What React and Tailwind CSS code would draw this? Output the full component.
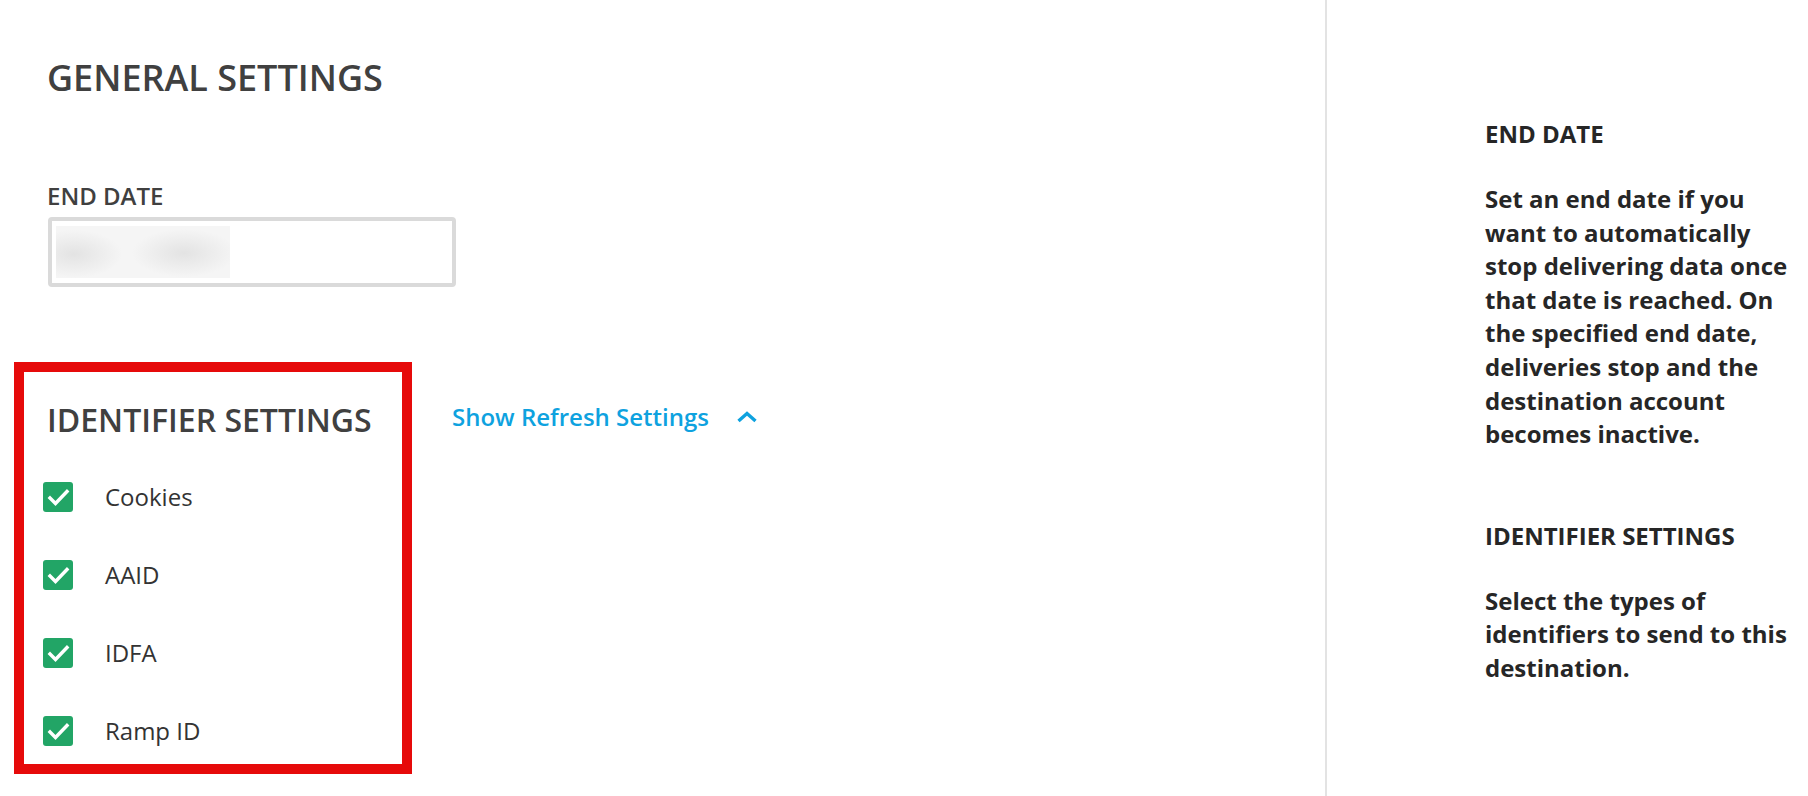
import React, { useState } from 'react';

const identifiers = ['Cookies', 'AAID', 'IDFA', 'Ramp ID'];

const CheckBox = ({ checked, onChange }) => (
    <button
        type="button"
        onClick={onChange}
        className={`flex h-[30px] w-[30px] shrink-0 items-center justify-center rounded-[3px] ${
            checked ? 'bg-[#22a566]' : 'border-2 border-[#bdbdbd] bg-white'
        }`}
    >
        {checked && (
            <svg width="30" height="30" viewBox="0 0 30 30" fill="none">
                <path d="M7 16 L12.5 21.5 L24 9.5" stroke="#fff" strokeWidth="3.4" strokeLinecap="square" strokeLinejoin="miter" />
            </svg>
        )}
    </button>
);

const App = () => {
    const [selected, setSelected] = useState(identifiers);
    const [showRefresh, setShowRefresh] = useState(true);

    const toggle = (name) => {
        setSelected(prev => (prev.includes(name) ? prev.filter(n => n !== name) : [...prev, name]));
    };

    return (
        <div className="flex min-h-[796px] bg-white font-['Open_Sans',sans-serif]">
            {/* main settings column */}
            <main className="w-[1325px] shrink-0 pl-[47px] pt-[60px]">
                <h1 className="text-[36px] leading-[36px] font-semibold text-[#404040]">GENERAL SETTINGS</h1>

                <label className="mt-[88px] block text-[24px] leading-[24px] font-semibold text-[#404040]">END DATE</label>
                <div className="mt-[9px] ml-[1px] h-[70px] w-[408px] rounded-[4px] border-[4px] border-[#dadada] px-[4px] py-[5px]">
                    {/* redacted date */}
                    <div className="h-full w-[174px] bg-[#f5f5f5] bg-[image:radial-gradient(48px_24px_at_18px_28px,#e3e3e3,#f5f5f500),radial-gradient(52px_24px_at_128px_27px,#e3e3e3,#f5f5f500)]" />
                </div>

                <div className="mt-[75px] flex items-start">
                    <section className="-ml-[33px] w-[398px] border-[10px] border-[#e60a0a] pl-[19px] pt-[32px] pb-[18px]">
                        <h2 className="pl-[4px] text-[32px] leading-[32px] font-semibold text-[#404040]">IDENTIFIER SETTINGS</h2>
                        <ul className="mt-[46px] flex flex-col gap-[48px]">
                            {identifiers.map(name => (
                                <li key={name} className="flex h-[30px] items-center">
                                    <CheckBox checked={selected.includes(name)} onChange={() => toggle(name)} />
                                    <span className="ml-[32px] text-[24px] leading-[30px] text-[#333333]">{name}</span>
                                </li>
                            ))}
                        </ul>
                    </section>

                    <button
                        type="button"
                        onClick={() => setShowRefresh(!showRefresh)}
                        className="ml-[40px] mt-[43px] flex items-center gap-[27px] text-[24px] leading-[24px] font-semibold text-[#0ea2df]"
                    >
                        Show Refresh Settings
                        <svg width="22" height="12" viewBox="0 0 22 12" fill="none" className={showRefresh ? '' : 'rotate-180'}>
                            <path d="M2.5 10 L11 2.5 L19.5 10" stroke="#0ea2df" strokeWidth="3.4" />
                        </svg>
                    </button>
                </div>
            </main>

            {/* help sidebar */}
            <aside className="flex-1 border-l-2 border-[#e3e3e3] pl-[158px] pt-[122px] text-[#262626]">
                <div className="w-[315px]">
                    <h3 className="text-[24px] leading-[24px] font-bold">END DATE</h3>
                    <p className="mt-[36px] text-[24px] leading-[1.4] font-bold">
                        Set an end date if you want to automatically stop delivering data once that date is reached. On the specified end date, deliveries stop and the destination account becomes inactive.
                    </p>

                    <h3 className="mt-[73px] text-[24px] leading-[24px] font-bold">IDENTIFIER SETTINGS</h3>
                    <p className="mt-[36px] text-[24px] leading-[1.4] font-bold">
                        Select the types of identifiers to send to this destination.
                    </p>
                </div>
            </aside>
        </div>
    );
};

export default App;
